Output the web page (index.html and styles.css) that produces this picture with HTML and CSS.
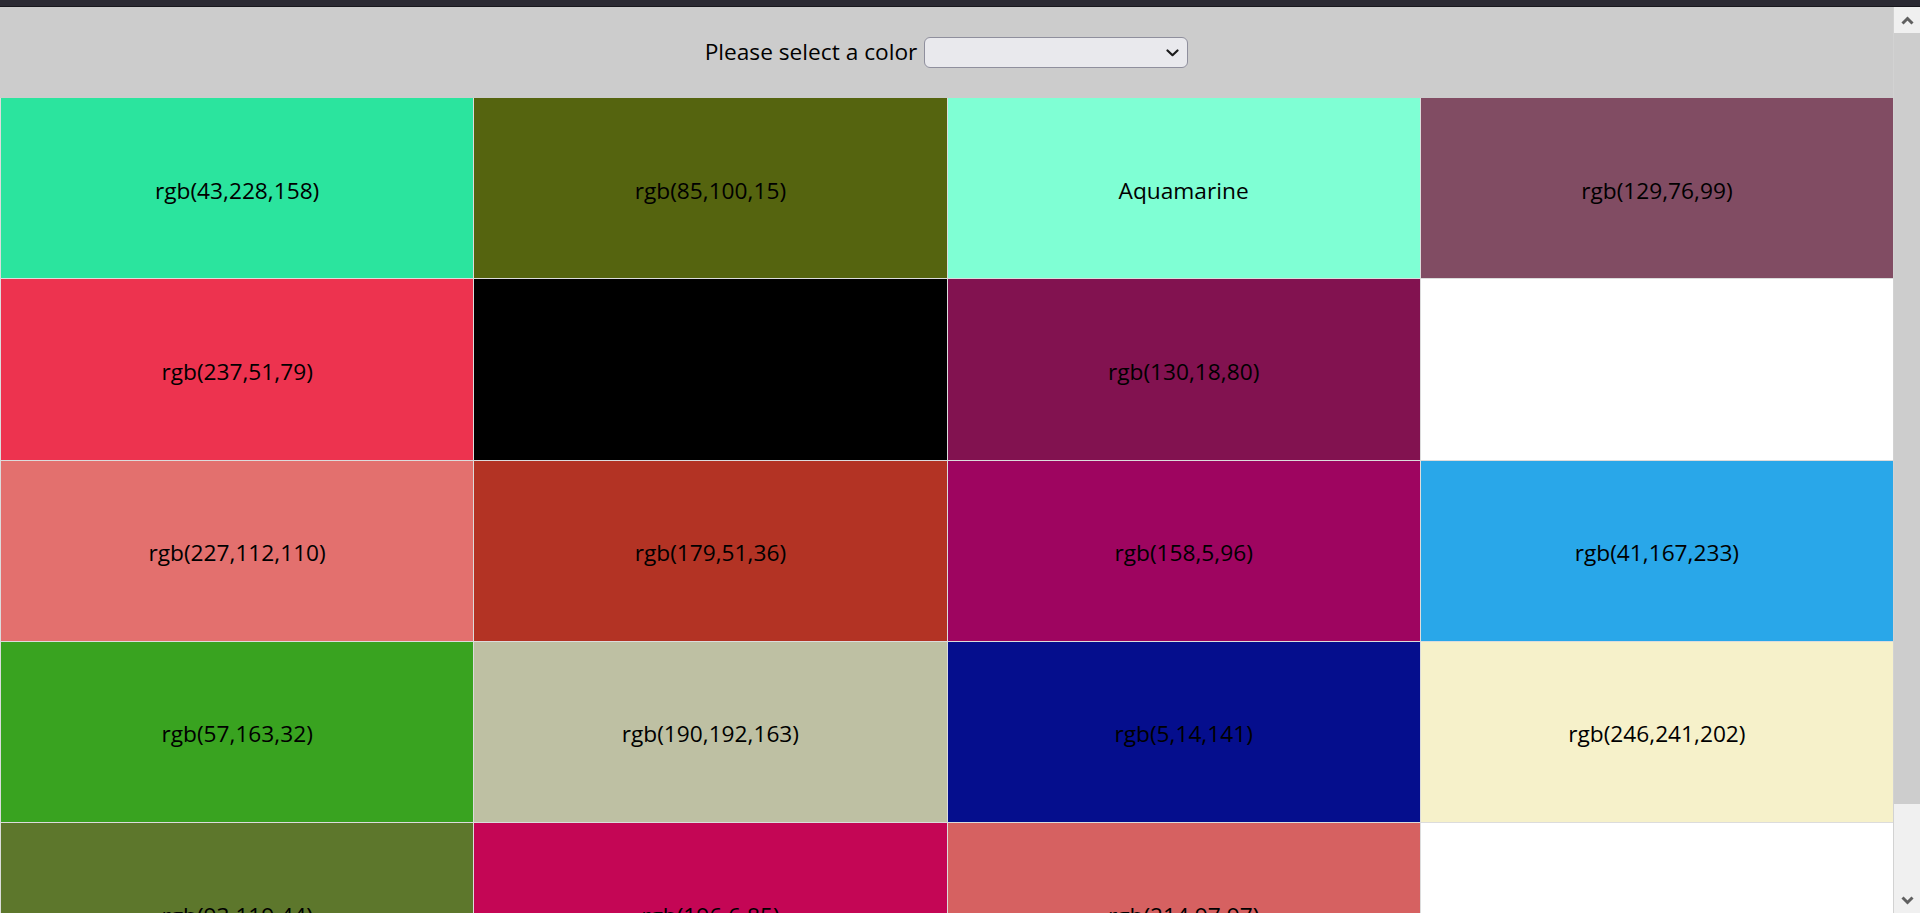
FILE: index.html
```html
<!DOCTYPE html>
<html lang="en">
<head>
<meta charset="utf-8">
<title>Colors</title>
<link rel="stylesheet" href="styles.css">
</head>
<body>
<div class="chrome-edge"></div>
<div class="viewport">
  <main class="page">
    <header class="picker">
      <label class="picker-label" for="color">Please select a color</label>
      <span class="select-wrap">
        <select id="color" class="select"><option></option></select>
        <svg class="select-arrow" width="13" height="8" viewBox="0 0 13 8"><path d="M1.5 1.5 L6.5 6.2 L11.5 1.5" fill="none" stroke="#1b1b1b" stroke-width="2.2" stroke-linecap="round" stroke-linejoin="round"/></svg>
      </span>
    </header>
    <section class="grid">
      <div class="cell" style="background:rgb(43,228,158)">rgb(43,228,158)</div>
      <div class="cell" style="background:rgb(85,100,15)">rgb(85,100,15)</div>
      <div class="cell" style="background:aquamarine">Aquamarine</div>
      <div class="cell" style="background:rgb(129,76,99)">rgb(129,76,99)</div>
      <div class="cell" style="background:rgb(237,51,79)">rgb(237,51,79)</div>
      <div class="cell" style="background:rgb(0,0,0)">rgb(0,0,0)</div>
      <div class="cell" style="background:rgb(130,18,80)">rgb(130,18,80)</div>
      <div class="cell" style="background:rgb(255,255,255);color:#fff">rgb(255,255,255)</div>
      <div class="cell" style="background:rgb(227,112,110)">rgb(227,112,110)</div>
      <div class="cell" style="background:rgb(179,51,36)">rgb(179,51,36)</div>
      <div class="cell" style="background:rgb(158,5,96)">rgb(158,5,96)</div>
      <div class="cell" style="background:rgb(41,167,233)">rgb(41,167,233)</div>
      <div class="cell" style="background:rgb(57,163,32)">rgb(57,163,32)</div>
      <div class="cell" style="background:rgb(190,192,163)">rgb(190,192,163)</div>
      <div class="cell" style="background:rgb(5,14,141)">rgb(5,14,141)</div>
      <div class="cell" style="background:rgb(246,241,202)">rgb(246,241,202)</div>
      <div class="cell" style="background:rgb(93,119,44)">rgb(93,119,44)</div>
      <div class="cell" style="background:rgb(196,6,85)">rgb(196,6,85)</div>
      <div class="cell" style="background:rgb(214,97,97)">rgb(214,97,97)</div>
      <div class="cell" style="background:rgb(255,255,255);color:#fff">rgb(255,255,255)</div>
    </section>
  </main>
  <aside class="scrollbar">
    <div class="sb-button">
      <svg width="13" height="9" viewBox="0 0 13 9"><path d="M1.5 7.5 L6.5 2.5 L11.5 7.5" fill="none" stroke="#606060" stroke-width="3"/></svg>
    </div>
    <div class="sb-thumb"></div>
    <div class="sb-track"></div>
    <div class="sb-button">
      <svg width="13" height="9" viewBox="0 0 13 9"><path d="M1.5 1.5 L6.5 6.5 L11.5 1.5" fill="none" stroke="#606060" stroke-width="3"/></svg>
    </div>
  </aside>
</div>
</body>
</html>
```

FILE: styles.css
```css
html, body {
  margin: 0;
  padding: 0;
  height: 100%;
  overflow: hidden;
}

body {
  background: #cccccc;
  font-family: "Open Sans", "Noto Sans", sans-serif;
  font-size: 22.7px;
  color: #000;
  display: flex;
  flex-direction: column;
}

.chrome-edge {
  height: 6px;
  flex: 0 0 6px;
  background: #2b2a33;
  border-bottom: 1px solid #18171d;
}

.viewport {
  flex: 1;
  display: flex;
  min-height: 0;
}

.page {
  flex: 1;
  min-width: 0;
  overflow: hidden;
}

.picker {
  height: 91px;
  display: flex;
  align-items: center;
  justify-content: center;
  gap: 7px;
}

.picker-label {
  line-height: 1;
}

.select-wrap {
  position: relative;
  display: block;
  width: 264px;
  height: 31px;
}

.select {
  appearance: none;
  -webkit-appearance: none;
  width: 264px;
  height: 31px;
  margin: 0;
  background: #e9e9ed;
  border: 1.5px solid #8f8f9d;
  border-radius: 6px;
  font-family: inherit;
  font-size: 22px;
}

.select-arrow {
  position: absolute;
  right: 9px;
  top: 12px;
  pointer-events: none;
}

.grid {
  display: grid;
  grid-template-columns: repeat(4, 1fr);
  grid-auto-rows: 180.25px;
  gap: 1px;
  padding-left: 1px;
  background: #dcdcdc;
}

.cell {
  display: flex;
  align-items: center;
  justify-content: center;
  padding-top: 4px;
}

.scrollbar {
  flex: 0 0 26px;
  display: flex;
  flex-direction: column;
  background: #f0f0f0;
  border-left: 1px solid #d2d2d2;
}

.sb-button {
  height: 26px;
  flex: 0 0 26px;
  display: flex;
  align-items: center;
  justify-content: center;
  background: #f0f0f0;
}

.sb-thumb {
  flex: 0 0 771px;
  background: #cdcdcd;
}

.sb-track {
  flex: 1;
}
```
